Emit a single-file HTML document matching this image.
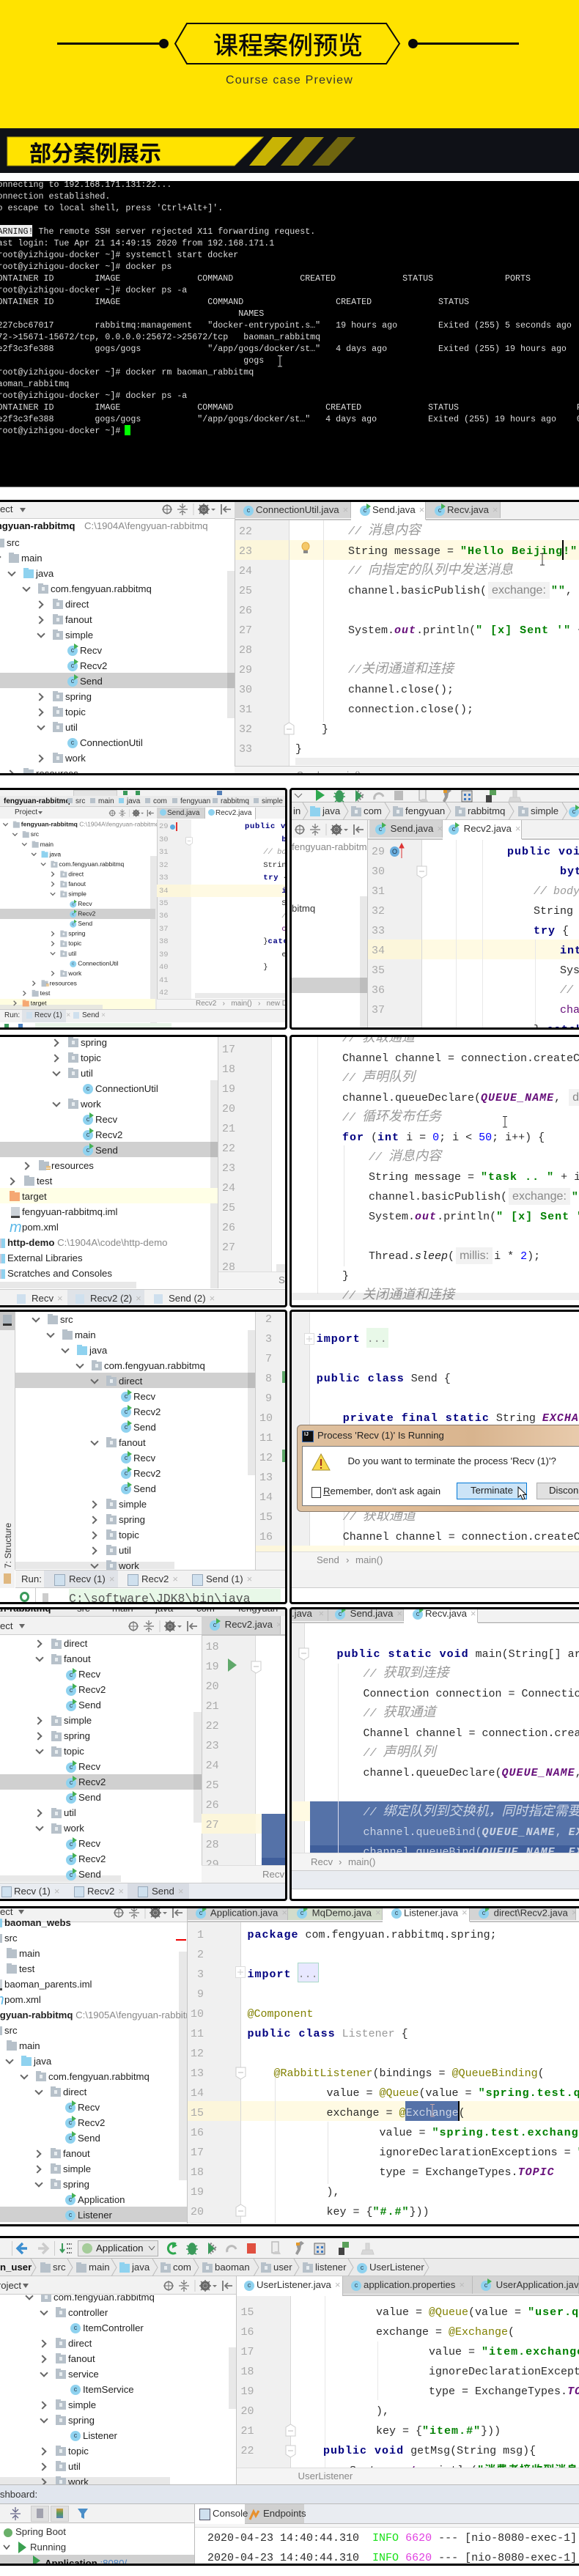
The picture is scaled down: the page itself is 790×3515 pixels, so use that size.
<!DOCTYPE html>
<html><head><meta charset="utf-8"><title>课程案例预览</title>
<style>
html,body{margin:0;padding:0;background:#fff}
html{overflow:hidden;width:790px;height:3515px}
body{position:relative;width:790px;height:3515px;overflow:hidden;font-family:"Liberation Sans","Noto Sans CJK SC",sans-serif}
.P{position:absolute;left:0;top:0;width:790px;height:3515px;background:#fff;overflow:hidden}
.W{position:absolute;left:0;top:0;width:790px;height:3515px;overflow:hidden}
.r{position:absolute}
p{position:absolute;margin:0;white-space:pre;font:13.2px/18px "Liberation Sans","Noto Sans CJK SC",sans-serif;color:#333}
.sm{font-size:10px}
.gr{color:#888}
.B{font-weight:bold;color:#111}
pre{position:absolute;margin:0}
.ln{font:15px/27px "Liberation Mono",monospace;color:#aaa}
.cd,.con{font:15px/27px "Liberation Mono","Noto Sans CJK SC",monospace;color:#2b2b2b}
.cd b{color:#000080;letter-spacing:.067em}
.cd s{text-decoration:none;color:#008000;font-weight:bold;letter-spacing:.067em}
.cd i{color:#660e7a;font-weight:bold;letter-spacing:.067em}
.cd i.p{color:#222;font-weight:normal;letter-spacing:0}
.cd cite{color:#999}
.cd em{font-size:18px;line-height:0}
.cd kbd{font:16px/0 "Liberation Sans",sans-serif;color:#888;background:#f2f2f2;padding:3px 5px;margin:0 2px}
.cd var{color:#0000ff;font-style:normal}
.cd dfn{color:#808000;font-style:normal}
.w,.w i,.w cite{color:#cdd6e6!important}
.T{position:absolute;font:13.2px/21px "Liberation Sans","Noto Sans CJK SC",sans-serif;color:#222}
.T p{position:static;height:21px;font:inherit;color:inherit}
.l1{margin-left:20px}.l2{margin-left:40px}.l3{margin-left:60px}.l4{margin-left:80px}.l5{margin-left:100px}.l6{margin-left:120px}
.sc{transform:scale(.645);transform-origin:0 0}
u{display:inline-block;text-decoration:none;vertical-align:middle;position:relative;width:21px;height:1px}
u.n::before,u.d::before{content:"";position:absolute;left:1px;top:-4px;width:6px;height:6px;border:solid #666;border-width:2px 2px 0 0;transform:rotate(45deg)}
u.d::before{transform:rotate(135deg);left:3px;top:-6px}
u.f,u.h,u.j,u.t,u.o{width:14px;height:12px;margin:0 3px 0 2px;background:#b7c1ca}
u.f::before,u.h::before,u.j::before,u.t::before,u.o::before{content:"";position:absolute;left:0;top:-2px;width:7px;height:2px;background:inherit}
u.f::after{content:"";position:absolute;left:5px;top:3px;width:4px;height:5px;background:#e8edf0}
u.j{background:#8fd2ef}
u.t{background:#f5a873}
u.o::after{content:"";position:absolute;right:-2px;bottom:0;width:6px;height:6px;background:repeating-linear-gradient(#d89a3a 0 1px,#fff 1px 2px)}
u.c{width:14px;height:14px;border-radius:50%;background:#8fd2ef;margin:0 3px 0 2px;font:9px/13px "Liberation Sans",sans-serif;color:#345;text-align:center}
u.c::before{content:"c"}
u.g::after{content:"";position:absolute;right:-1px;top:-3px;border-top:4px solid transparent;border-bottom:4px solid transparent;border-left:6px solid #45b055}
u.e{width:12px;height:15px;margin:0 3px 0 4px;background:#ccd2d8;border-bottom:3px solid #444;box-sizing:border-box}
u.m{width:16px;height:15px;margin:0 1px 0 2px;font:italic 20px/14px "Liberation Sans",sans-serif;color:#5bb8e8}
u.m::before{content:"m"}
u.x{width:12px;height:13px;margin:0 3px 0 4px;background:linear-gradient(90deg,#8fd2ef 30%,#ccd 30% 60%,#8fd2ef 60%)}
.tb{position:absolute;box-sizing:border-box;padding-left:10px;font:13.2px/22px "Liberation Sans",sans-serif;white-space:pre;color:#333;background:#d4d4d4;overflow:hidden;border-right:1px solid #bbb}
.on{background:#fff}
small{font-size:13px;color:#bbb;margin-left:5px}
.tr{position:absolute;width:0;height:0;border-left:4px solid transparent;border-right:4px solid transparent;border-top:6px solid #666}
.fr{position:absolute;box-sizing:border-box;border:3px solid #000;border-radius:4px}
svg{position:absolute;overflow:visible}
</style></head><body>
<svg width="0" height="0" style="left:0;top:0">
<symbol id="pb" viewBox="0 0 100 20" overflow="visible"><circle cx="8" cy="10" r="5.5" fill="none" stroke="#777" stroke-width="1.6"/><path d="M8 3V17M1 10H15" stroke="#777"/><path d="M22 10H36M29 2V7M29 18V13M25 5l4 3 4-3M25 15l4-3 4 3" fill="none" stroke="#777" stroke-width="1.3"/><path d="M44 2V18" stroke="#ccc"/><circle cx="58" cy="10" r="5" fill="none" stroke="#666" stroke-width="3"/><path d="M58 2V18M50 10H66M52 4l12 12M64 4L52 16" stroke="#666" stroke-width="1.4"/><path d="M68 9h6l-3 3z" fill="#777"/><path d="M82 3V17M95 10H85M89 6l-4 4 4 4" fill="none" stroke="#777" stroke-width="1.8"/></symbol>
<symbol id="tb" viewBox="0 0 285 24" overflow="visible"><path d="M27 5a5 7.5 0 1 0 .1 0ZM20 8l3 2M34 8l-3 2M19 13h4M35 13h-4M21 20l3-2M33 20l-3-2" fill="#3a9a5a" stroke="#3a9a5a" stroke-width="1.5"/><path d="M49 4 58 12 49 20Z" fill="#3a9a5a"/><path d="M52 5l8 7-8 7" fill="none" stroke="#888" stroke-width="3" stroke-dasharray="2 2"/><path d="M75 17A6 6 0 0 1 87 13" fill="none" stroke="#bbb" stroke-width="3"/><rect x="102" y="5" width="12" height="13" fill="#bbb"/><path d="M136 3h9v15h-9Z" fill="#eee" stroke="#bbb" stroke-width="1.5"/><path d="M137 20h11l-2-4h-6Z" fill="#ccc"/><path d="M169 6 176 2l4 3-4 3-1 6-4 7-3-2 3-6Z" fill="#999"/><path d="M169 4h5v4h-5Z" fill="#e49a2c"/><path d="M194 5h14v15h-14Z" fill="#ddd" stroke="#666"/><path d="M197 9h3v3h-3ZM203 9h3v3h-3ZM197 15h3v3h-3ZM203 15h3v3h-3Z" fill="#3b78c2"/><path d="M227 11h8v10h-8Z" fill="#444"/><path d="M232 3h9v8h-9Z" fill="#5aa05a"/><path d="M264 5h5v9h-5ZM260 14h13l2 6h-17Z" fill="#d8d8d8" stroke="#ccc"/></symbol>
<symbol id="fo" viewBox="0 0 15 18" overflow="visible"><path d="M1 5 7.5 1 14 5V17H1Z" fill="#fff" stroke="#ccc"/><path d="M4 10H11" stroke="#bbb"/></symbol>
<symbol id="fd" viewBox="0 0 15 18" overflow="visible"><path d="M1 1H14V13L7.5 17 1 13Z" fill="#fff" stroke="#ccc"/><path d="M4 8H11" stroke="#bbb"/></symbol>
<symbol id="sp" viewBox="0 0 8 24" overflow="visible"><path d="M0 0 7 12 0 24" fill="none" stroke="#bbb"/></symbol>
</svg>

<!-- Header -->
<div class="r" style="left:0;top:0;width:790px;height:175px;background:#ffe300"></div>
<div class="r" style="left:78px;top:58px;width:146px;height:3px;background:#0a0a0a"></div>
<div class="r" style="left:217px;top:53px;width:13px;height:13px;border-radius:50%;background:#0a0a0a"></div>
<div class="r" style="left:557px;top:53px;width:13px;height:13px;border-radius:50%;background:#0a0a0a"></div>
<div class="r" style="left:564px;top:58px;width:144px;height:3px;background:#0a0a0a"></div>
<svg style="left:0;top:0" width="790" height="100"><path d="M239 59.5 255 32H527L545 59.5 527 87H255Z" fill="none" stroke="#0a0a0a" stroke-width="2"/></svg>
<p style="left:290px;top:38px;width:206px;text-align:center;font:34px/44px 'Noto Sans CJK SC',sans-serif;color:#0a0a0a;-webkit-text-stroke:.4px #0a0a0a">课程案例预览</p>
<p style="left:250px;top:100px;width:290px;text-align:center;font:16px/20px 'Liberation Sans',sans-serif;letter-spacing:1.2px;color:#333">Course case Preview</p>
<!-- Banner -->
<div class="r" style="left:0;top:175px;width:790px;height:61px;background:#0f1117"></div>
<svg style="left:0;top:175px" width="790" height="61"><path d="M10 12H359L320 51H10Z" fill="#ffe300" stroke="#b9a60a"/><path d="M372 12H399L362 51H340Z" fill="#c9b404"/><path d="M416 12H442L407 51H383Z" fill="#9c8c0a"/><path d="M461 12H485L449 51H426Z" fill="#6f650f"/></svg>
<p style="left:40px;top:186px;font:bold 30px/42px 'Noto Sans CJK SC',sans-serif;color:#0a0a0a">部分案例展示</p>
<!-- Terminal -->
<div class="P" style="clip-path:inset(247px 0 2850px 0);background:#000">
<div class="r" style="left:0;top:307px;width:44px;height:16px;background:#eee"></div>
<pre style="left:-10.5px;top:243.7px;font:11.67px/16px 'Liberation Mono',monospace;color:#ddd">Connecting to 192.168.171.131:22...
Connection established.
To escape to local shell, press 'Ctrl+Alt+]'.

<span style="color:#111">WARNING!</span> The remote SSH server rejected X11 forwarding request.
Last login: Tue Apr 21 14:49:15 2020 from 192.168.171.1
[root@yizhigou-docker ~]# systemctl start docker
[root@yizhigou-docker ~]# docker ps
CONTAINER ID        IMAGE               COMMAND             CREATED             STATUS              PORTS
[root@yizhigou-docker ~]# docker ps -a
CONTAINER ID        IMAGE                 COMMAND                  CREATED             STATUS
                                                NAMES
8227cbc67017        rabbitmq:management   "docker-entrypoint.s…"   19 hours ago        Exited (255) 5 seconds ago
 72->15671-15672/tcp, 0.0.0.0:25672->25672/tcp   baoman_rabbitmq
8e2f3c3fe388        gogs/gogs             "/app/gogs/docker/st…"   4 days ago          Exited (255) 19 hours ago
                                                 gogs
[root@yizhigou-docker ~]# docker rm baoman_rabbitmq
baoman_rabbitmq
[root@yizhigou-docker ~]# docker ps -a
CONTAINER ID        IMAGE               COMMAND                  CREATED             STATUS                       PORTS
8e2f3c3fe388        gogs/gogs           "/app/gogs/docker/st…"   4 days ago          Exited (255) 19 hours ago    0
[root@yizhigou-docker ~]#</pre>
<div class="r" style="left:170px;top:580px;width:8px;height:14px;background:#0f0"></div>
<svg style="left:378px;top:485px" width="8" height="16"><path d="M1 .5H7M4 .5V15M1 15H7" stroke="#ccc" fill="none"/></svg>
</div>
<div class="r" style="left:0;top:664px;width:790px;height:1px;background:#888"></div>

<!-- Section A -->
<div class="P" style="clip-path:inset(685px 0 2460px 0)">
<div class="r" style="left:0;top:685px;width:320px;height:22px;background:#f2f2f2;border-bottom:1px solid #ccc"></div>
<p style="left:-23.5px;top:686px">Project</p><div class="tr" style="left:27px;top:693px"></div>
<svg style="left:220px;top:685px" width="100" height="20"><use href="#pb"/></svg>
<p class="B" style="left:-17px;top:709px">fengyuan-rabbitmq</p><p class="gr" style="left:115px;top:709px">C:\1904A\fengyuan-rabbitmq</p>
<div class="r" style="left:310px;top:779px;width:10px;height:201px;background:#e8e8e8"></div>
<div class="r" style="left:0;top:918px;width:320px;height:21px;background:#d0d0d0"></div>
<div class="r" style="left:310px;top:918px;width:10px;height:21px;background:#bdbdbd"></div>
<div class="T" style="left:-31px;top:729.5px">
<p><u class="d"></u><u class="h"></u>src</p>
<p class="l1"><u class="d"></u><u class="h"></u>main</p>
<p class="l2"><u class="d"></u><u class="j"></u>java</p>
<p class="l3"><u class="d"></u><u class="f"></u>com.fengyuan.rabbitmq</p>
<p class="l4"><u class="n"></u><u class="f"></u>direct</p>
<p class="l4"><u class="n"></u><u class="f"></u>fanout</p>
<p class="l4"><u class="d"></u><u class="f"></u>simple</p>
<p class="l5"><u></u><u class="c g"></u>Recv</p>
<p class="l5"><u></u><u class="c g"></u>Recv2</p>
<p class="l5"><u></u><u class="c g"></u>Send</p>
<p class="l4"><u class="n"></u><u class="f"></u>spring</p>
<p class="l4"><u class="n"></u><u class="f"></u>topic</p>
<p class="l4"><u class="d"></u><u class="f"></u>util</p>
<p class="l5"><u></u><u class="c"></u>ConnectionUtil</p>
<p class="l4"><u class="n"></u><u class="f"></u>work</p>
<p class="l2"><u class="n"></u><u class="o"></u>resources</p>
</div>
<div class="r" style="left:320px;top:685px;width:470px;height:22px;background:#f2f2f2"></div>
<div class="r" style="left:320px;top:685px;width:1px;height:370px;background:#c4c4c4"></div>
<div class="tb" style="left:320px;top:685px;width:159px;height:22px"><u class="c"></u>ConnectionUtil.java<small>×</small></div>
<div class="tb on" style="left:479px;top:685px;width:102px;height:24px"><u class="c g"></u>Send.java<small>×</small></div>
<div class="tb" style="left:581px;top:685px;width:102px;height:22px"><u class="c g"></u>Recv.java<small>×</small></div>
<div class="r" style="left:321px;top:708px;width:158px;height:2px;background:#c4c4c4"></div>
<div class="r" style="left:581px;top:708px;width:209px;height:2px;background:#c4c4c4"></div>
<div class="r" style="left:321px;top:710px;width:73px;height:345px;background:#f0f0f0;border-right:1px solid #d8d8d8"></div>
<div class="r" style="left:321px;top:737px;width:73px;height:27px;background:#fcf6db"></div>
<div class="r" style="left:395px;top:737px;width:395px;height:27px;background:#fffae3"></div>
<div class="r" style="left:441px;top:710px;width:1px;height:275px;background:#e4e4e4"></div>
<pre class="ln" style="left:326px;top:712px">22
23
24
25
26
27
28
29
30
31
32
33</pre>
<pre class="cd" style="left:403px;top:712px">        <cite>// <em>消息内容</em></cite>
        String message = <s>"Hello Beijing!"</s>
        <cite>// <em>向指定的队列中发送消息</em></cite>
        channel.basicPublish(<kbd>exchange:</kbd><s>""</s>,

        System.<i>out</i>.println(<s>" [x] Sent '"</s> +

        <cite>//<em>关闭通道和连接</em></cite>
        channel.close();
        connection.close();
    }
}</pre>
<div class="r" style="left:767px;top:737px;width:2px;height:27px;background:#000"></div>
<svg style="left:736px;top:755px" width="8" height="17"><path d="M1 .5H7M4 .5V16M1 16H7" stroke="#333" fill="none"/></svg>
<svg style="left:411px;top:740px" width="12" height="16"><ellipse cx="6" cy="5.5" rx="5" ry="5.5" fill="#f5c96a" stroke="#e0a840"/><rect x="3" y="11" width="6" height="4" fill="#888"/></svg>
<svg style="left:387px;top:985px" width="15" height="18"><use href="#fo"/></svg>
<div class="r" style="left:403px;top:1034px;width:387px;height:10px;background:#eee"></div>
<div class="r" style="left:320px;top:1045px;width:470px;height:10px;background:#f4f4f4;border-top:1px solid #ccc"></div>
<p class="gr" style="left:405px;top:1049px">Send  ›  main()</p>
</div>

<!-- Panel B1 -->
<div class="P" style="clip-path:inset(1078px 401px 2113px 0)">
<div class="r" style="left:0;top:1078px;width:390px;height:8px;background:#f2f2f2"></div>
<div class="r" style="left:100px;top:1078px;width:58px;height:7px;background:#e4e4e4;border:1px solid #ccc"></div>
<div class="r" style="left:168px;top:1079px;width:6px;height:6px;background:#3a9a5a"></div>
<div class="r" style="left:185px;top:1079px;width:6px;height:6px;background:#3a9a5a"></div>
<div class="r" style="left:296px;top:1079px;width:7px;height:6px;background:#5580b8"></div>
<div class="r" style="left:0;top:1086px;width:390px;height:15px;background:#ebebeb;border-bottom:1px solid #ccc;box-sizing:border-box"></div>
<p class="sm B" style="left:5px;top:1085px">fengyuan-rabbitmq</p>
<p class="sm" style="left:103px;top:1085px">src</p><p class="sm" style="left:134px;top:1085px">main</p><p class="sm" style="left:173px;top:1085px">java</p><p class="sm" style="left:209px;top:1085px">com</p><p class="sm" style="left:246px;top:1085px">fengyuan</p><p class="sm" style="left:301px;top:1085px">rabbitmq</p><p class="sm" style="left:357px;top:1085px">simple</p>
<div class="r" style="left:92px;top:1089px;width:7px;height:7px;background:#b7c1ca"></div><div class="r" style="left:123px;top:1089px;width:7px;height:7px;background:#b7c1ca"></div><div class="r" style="left:162px;top:1089px;width:7px;height:7px;background:#8fd2ef"></div><div class="r" style="left:198px;top:1089px;width:7px;height:7px;background:#b7c1ca"></div><div class="r" style="left:235px;top:1089px;width:7px;height:7px;background:#b7c1ca"></div><div class="r" style="left:290px;top:1089px;width:7px;height:7px;background:#b7c1ca"></div><div class="r" style="left:346px;top:1089px;width:7px;height:7px;background:#b7c1ca"></div>
<div class="r" style="left:0;top:1101px;width:214px;height:16px;background:#f2f2f2"></div>
<p class="sm" style="left:20px;top:1100px">Project</p><div class="tr" style="left:52px;top:1107px;border-width:4px 3px 0"></div>
<svg style="left:148px;top:1103px" width="65" height="13"><use href="#pb"/></svg>
<div class="r" style="left:205px;top:1168px;width:9px;height:238px;background:#e8e8e8"></div>
<div class="r" style="left:0;top:1240px;width:212px;height:14px;background:#d0d0d0"></div>
<div class="r" style="left:0;top:1363px;width:212px;height:14px;background:#fffde0"></div>
<div class="r" style="left:0;top:1371px;width:140px;height:6px;background:#e8e8e0"></div>
<div class="T sc" style="left:2.6px;top:1118.2px">
<p><u class="d"></u><u class="h"></u><span style="font-weight:bold">fengyuan-rabbitmq</span> <span style="color:#888">C:\1904A\fengyuan-rabbitmq</span></p>
<p class="l1"><u class="d"></u><u class="h"></u>src</p>
<p class="l2"><u class="d"></u><u class="h"></u>main</p>
<p class="l3"><u class="d"></u><u class="j"></u>java</p>
<p class="l4"><u class="d"></u><u class="f"></u>com.fengyuan.rabbitmq</p>
<p class="l5"><u class="n"></u><u class="f"></u>direct</p>
<p class="l5"><u class="n"></u><u class="f"></u>fanout</p>
<p class="l5"><u class="d"></u><u class="f"></u>simple</p>
<p class="l6"><u></u><u class="c g"></u>Recv</p>
<p class="l6"><u></u><u class="c g"></u>Recv2</p>
<p class="l6"><u></u><u class="c g"></u>Send</p>
<p class="l5"><u class="n"></u><u class="f"></u>spring</p>
<p class="l5"><u class="n"></u><u class="f"></u>topic</p>
<p class="l5"><u class="d"></u><u class="f"></u>util</p>
<p class="l6"><u></u><u class="c"></u>ConnectionUtil</p>
<p class="l5"><u class="n"></u><u class="f"></u>work</p>
<p class="l3"><u class="n"></u><u class="o"></u>resources</p>
<p class="l2"><u class="n"></u><u class="h"></u>test</p>
<p class="l1"><u class="n"></u><u class="t"></u>target</p>
</div>
<div class="r" style="left:212px;top:1101px;width:178px;height:16px;background:#f2f2f2"></div>
<div class="tb" style="left:214px;top:1102px;width:66px;height:15px;padding-left:14px;font-size:10px;line-height:15px">Send.java <small style="font-size:9px">×</small></div>
<div class="r" style="left:218px;top:1104px;width:9px;height:9px;border-radius:50%;background:#8fd2ef"></div>
<div class="tb on" style="left:280px;top:1102px;width:69px;height:16px;padding-left:14px;font-size:10px;line-height:15px">Recv2.java <small style="font-size:9px">×</small></div>
<div class="r" style="left:284px;top:1104px;width:9px;height:9px;border-radius:50%;background:#8fd2ef"></div>
<div class="r" style="left:214px;top:1118px;width:46px;height:245px;background:#f0f0f0;border-left:1px solid #ccc"></div>
<div class="r" style="left:214px;top:1207px;width:46px;height:17px;background:#fcf6db"></div>
<div class="r" style="left:260px;top:1207px;width:130px;height:17px;background:#fffae3"></div>
<pre style="left:217px;top:1120.3px;font:10.5px/17.45px 'Liberation Mono',monospace;color:#aaa">29
30
31
32
33
34
35
36
37
38
39
40
41
42</pre>
<div class="r" style="left:232px;top:1125px;width:7px;height:7px;border-radius:50%;background:#5ba9e0"></div>
<div class="r" style="left:240px;top:1122px;width:1.5px;height:12px;background:#d33"></div>
<pre class="cd" style="left:334px;top:1120.3px;font-size:10.5px;line-height:17.45px"><b>public void</b>
        <b>byte</b>
    <cite>// body</cite>
    String
    <b>try</b> {
        <b>int</b>
        S
        <cite>//</cite>
        <span style="color:#660e7a">c</span>
    }<b>catch</b>
        e
    }</pre>
<svg style="left:253px;top:1142px" width="10" height="12"><use href="#fd"/></svg>
<div class="r" style="left:266px;top:1355px;width:124px;height:7px;background:#eaeaea"></div>
<div class="r" style="left:214px;top:1363px;width:176px;height:14px;background:#f4f4f4;border-top:1px solid #ddd;box-sizing:border-box"></div>
<p class="sm gr" style="left:267px;top:1361px">Recv2   ›   main()   ›   new DefaultC</p>
<div class="r" style="left:0;top:1377px;width:390px;height:18px;background:#f2f2f2;border-top:1px solid #ccc;box-sizing:border-box"></div>
<div class="r" style="left:30px;top:1378px;width:60px;height:17px;background:#dfe3e8"></div>
<p class="sm" style="left:6px;top:1377px">Run:</p><p class="sm" style="left:47px;top:1377px">Recv (1)  <span style="color:#bbb">×</span></p><p class="sm" style="left:112px;top:1377px">Send <span style="color:#bbb">×</span></p>
<div class="r" style="left:36px;top:1381px;width:8px;height:9px;background:#cfe0ee"></div><div class="r" style="left:100px;top:1381px;width:8px;height:9px;background:#cfe0ee"></div>
<div class="r" style="left:48px;top:1396px;width:186px;height:7px;background:#e8f5e8"></div>
<div class="r" style="left:6px;top:1397px;width:6px;height:6px;background:#3a9a5a"></div>
<div class="r" style="left:25px;top:1397px;width:6px;height:6px;background:#4a80c0"></div>
</div>

<!-- Panel B2 -->
<div class="P" style="clip-path:inset(1078px 0 2113px 398px)">
<div class="r" style="left:398px;top:1078px;width:392px;height:16px;background:#f2f2f2;border-bottom:1px solid #bbb"></div>
<svg style="left:400px;top:1079px" width="14" height="14"><path d="M2 4 7 9 12 4" fill="none" stroke="#666"/></svg>
<svg style="left:430px;top:1076px;" width="15" height="20"><path d="M1 1 13 9 1 17Z" fill="#2fa84f"/></svg>
<svg style="left:436px;top:1074px" width="285" height="24"><use href="#tb"/></svg>
<div class="r" style="left:398px;top:1095px;width:392px;height:24px;background:#ececec;border-bottom:1px solid #c8c8c8;box-sizing:border-box"></div>
<p style="left:400px;top:1098px">in</p>
<svg style="left:413px;top:1095px" width="8" height="24"><use href="#sp"/></svg>
<p style="left:421px;top:1098px"><u class="j"></u>java</p>
<svg style="left:468px;top:1095px" width="8" height="24"><use href="#sp"/></svg>
<p style="left:477px;top:1098px"><u class="f"></u>com</p>
<svg style="left:525px;top:1095px" width="8" height="24"><use href="#sp"/></svg>
<p style="left:534px;top:1098px"><u class="f"></u>fengyuan</p>
<svg style="left:608px;top:1095px" width="8" height="24"><use href="#sp"/></svg>
<p style="left:619px;top:1098px"><u class="f"></u>rabbitmq</p>
<svg style="left:694px;top:1095px" width="8" height="24"><use href="#sp"/></svg>
<p style="left:705px;top:1098px"><u class="f"></u>simple</p>
<svg style="left:767px;top:1095px" width="8" height="24"><use href="#sp"/></svg>
<p style="left:774px;top:1098px"><u class="c g"></u></p>
<div class="r" style="left:398px;top:1119px;width:392px;height:24px;background:#f2f2f2"></div>
<svg style="left:401px;top:1122px" width="100" height="20"><use href="#pb"/></svg>
<p class="gr" style="left:398px;top:1147px">fengyuan-rabbitm</p>
<p style="left:398px;top:1231px">bitmq</p>
<div class="r" style="left:491px;top:1223px;width:10px;height:180px;background:#e8e8e8"></div>
<div class="r" style="left:398px;top:1334px;width:103px;height:21px;background:#d0d0d0"></div>
<div class="r" style="left:491px;top:1334px;width:10px;height:21px;background:#bdbdbd"></div>
<div class="tb" style="left:504px;top:1119px;width:100px;height:24px;padding-left:6px;line-height:24px;background:#d4d4d4"><u class="c g"></u> Send.java<small>×</small></div>
<div class="tb on" style="left:604px;top:1119px;width:108px;height:26px;padding-left:6px;line-height:24px"><u class="c g"></u> Recv2.java<small>×</small></div>
<div class="r" style="left:501px;top:1119px;width:1px;height:284px;background:#c4c4c4"></div>
<div class="r" style="left:502px;top:1144px;width:102px;height:2px;background:#c4c4c4"></div><div class="r" style="left:712px;top:1144px;width:78px;height:2px;background:#c4c4c4"></div>
<div class="r" style="left:502px;top:1146px;width:73px;height:258px;background:#f0f0f0;border-right:1px solid #d8d8d8"></div>
<div class="r" style="left:502px;top:1282px;width:73px;height:27px;background:#fcf6db"></div>
<div class="r" style="left:576px;top:1282px;width:214px;height:27px;background:#fffae3"></div>
<div class="r" style="left:622px;top:1146px;width:1px;height:258px;background:#e8e8e8"></div>
<div class="r" style="left:658px;top:1146px;width:1px;height:258px;background:#e8e8e8"></div>
<div class="r" style="left:730px;top:1282px;width:1px;height:120px;background:#e8e8e8"></div>
<pre class="ln" style="left:507px;top:1149px">29
30
31
32
33
34
35
36
37</pre>
<div class="r" style="left:532px;top:1155px;width:13px;height:14px;border-radius:50%;background:#6aaede;font:9px/14px 'Liberation Sans',sans-serif;text-align:center;color:#234">O</div>
<svg style="left:544px;top:1150px" width="8" height="21"><path d="M4 21V3M1 7 4 1 7 7Z" stroke="#d33" fill="#d33"/></svg>
<svg style="left:568px;top:1181px" width="15" height="18"><use href="#fd"/></svg>
<pre class="cd" style="left:692px;top:1149px"><b>public void</b>
        <b>byte</b>
    <cite>// body</cite>
    String
    <b>try</b> {
        <b>int</b>
        Sys
        <cite>//</cite>
        <span style="color:#660e7a">cha</span>
    } <b>catch</b></pre>
</div>

<!-- Panel C1 -->
<div class="P" style="clip-path:inset(1415px 401px 1734px 0)">
<div class="r" style="left:287px;top:1474px;width:10px;height:284px;background:#e8e8e8"></div>
<div class="r" style="left:0;top:1558px;width:297px;height:21px;background:#d0d0d0"></div>
<div class="r" style="left:287px;top:1558px;width:10px;height:21px;background:#bdbdbd"></div>
<div class="r" style="left:0;top:1621px;width:297px;height:21px;background:#ffffe6"></div>
<div class="T" style="left:-30px;top:1411.5px">
<p class="l5"><u class="n"></u><u class="f"></u>spring</p>
<p class="l5"><u class="n"></u><u class="f"></u>topic</p>
<p class="l5"><u class="d"></u><u class="f"></u>util</p>
<p class="l6"><u></u><u class="c"></u>ConnectionUtil</p>
<p class="l5"><u class="d"></u><u class="f"></u>work</p>
<p class="l6"><u></u><u class="c g"></u>Recv</p>
<p class="l6"><u></u><u class="c g"></u>Recv2</p>
<p class="l6"><u></u><u class="c g"></u>Send</p>
<p class="l3"><u class="n"></u><u class="o"></u>resources</p>
<p class="l2"><u class="n"></u><u class="h"></u>test</p>
<p class="l1"><u></u><u class="t"></u>target</p>
<p class="l1"><u></u><u class="e"></u>fengyuan-rabbitmq.iml</p>
<p class="l1"><u></u><u class="m"></u>pom.xml</p>
<p><u></u><u class="x"></u><span style="font-weight:bold">http-demo</span> <span style="color:#888">C:\1904A\code\http-demo</span></p>
<p><u></u><u class="x"></u>External Libraries</p>
<p><u></u><u class="x"></u>Scratches and Consoles</p>
</div>
<div class="r" style="left:0;top:1749px;width:186px;height:9px;background:#e8e8e8"></div>
<div class="r" style="left:297px;top:1415px;width:74px;height:320px;background:#f0f0f0;border-left:1px solid #ccc;border-right:1px solid #e0e0e0;box-sizing:border-box"></div>
<pre class="ln" style="left:303px;top:1419px">17
18
19
20
21
22
23
24
25
26
27
28</pre>
<div class="r" style="left:297px;top:1735px;width:93px;height:23px;background:#f4f4f4;border-top:1px solid #ddd;border-left:1px solid #ccc;box-sizing:border-box"></div>
<div class="r" style="left:377px;top:1725px;width:13px;height:10px;background:#e8e8e8"></div>
<p class="gr" style="left:380px;top:1738px">S</p>
<div class="r" style="left:0;top:1759px;width:390px;height:23px;background:#f2f2f2;border-top:1px solid #ccc;box-sizing:border-box"></div>
<div class="r" style="left:92px;top:1760px;width:105px;height:22px;background:#dfe3e8"></div>
<p style="left:23px;top:1763px"><u style="width:12px;height:13px;background:#cfe0ee;margin-right:8px"></u>Recv<small>×</small></p>
<p style="left:103px;top:1763px"><u style="width:12px;height:13px;background:#cfe0ee;margin-right:8px"></u>Recv2 (2)<small>×</small></p>
<p style="left:210px;top:1763px"><u style="width:12px;height:13px;background:#cfe0ee;margin-right:8px"></u>Send (2)<small>×</small></p>
</div>

<!-- Panel C2 -->
<div class="P" style="clip-path:inset(1415px 0 1734px 398px)">
<div class="r" style="left:433px;top:1415px;width:1px;height:350px;background:#e4e4e4"></div>
<div class="r" style="left:469px;top:1563px;width:1px;height:165px;background:#e4e4e4"></div>
<pre class="cd" style="left:467px;top:1403.8px"><cite>// <em>获取通道</em></cite>
Channel channel = connection.createChannel();
<cite>// <em>声明队列</em></cite>
channel.queueDeclare(<i>QUEUE_NAME</i>, <kbd>d</kbd>
<cite>// <em>循环发布任务</em></cite>
<b>for</b> (<b>int</b> i = <var>0</var>; i &lt; <var>50</var>; i++) {
    <cite>// <em>消息内容</em></cite>
    String message = <s>"task .. "</s> + i
    channel.basicPublish(<kbd>exchange:</kbd><s>"</s>
    System.<i>out</i>.println(<s>" [x] Sent "</s>

    Thread.<i class="p">sleep</i>(<kbd>millis:</kbd>i * <var>2</var>);
}
<cite>// <em>关闭通道和连接</em></cite></pre>
<svg style="left:685px;top:1523px" width="8" height="16"><path d="M1 .5H7M4 .5V15M1 15H7" stroke="#333" fill="none"/></svg>
<div class="r" style="left:398px;top:1764px;width:392px;height:10px;background:#ededed;mix-blend-mode:multiply"></div>
</div>

<!-- Panel D1 -->
<div class="P" style="clip-path:inset(1790px 401px 1329px 0)">
<div class="r" style="left:0;top:1790px;width:20px;height:352px;background:#f2f2f2;border-right:1px solid #ccc"></div>
<div class="r" style="left:0;top:1790px;width:20px;height:25px;background:#c8c8c8"></div>
<div class="r" style="left:4px;top:1794px;width:12px;height:15px;background:#aab4bc;border-bottom:3px solid #333;box-sizing:border-box"></div>
<p style="left:3px;top:2078px;writing-mode:vertical-rl;transform:rotate(180deg);font-size:12px;line-height:16px">7: Structure</p>
<div class="r" style="left:338px;top:1815px;width:10px;height:198px;background:#e8e8e8"></div>
<div class="r" style="left:21px;top:1873px;width:327px;height:21px;background:#d0d0d0"></div>
<div class="r" style="left:338px;top:1873px;width:10px;height:21px;background:#bdbdbd"></div>
<div class="r" style="left:21px;top:2131px;width:217px;height:10px;background:#e8e8e8"></div>
<div class="T" style="left:42px;top:1789.5px">
<p><u class="d"></u><u class="h"></u>src</p>
<p class="l1"><u class="d"></u><u class="h"></u>main</p>
<p class="l2"><u class="d"></u><u class="j"></u>java</p>
<p class="l3"><u class="d"></u><u class="f"></u>com.fengyuan.rabbitmq</p>
<p class="l4"><u class="d"></u><u class="f"></u>direct</p>
<p class="l5"><u></u><u class="c g"></u>Recv</p>
<p class="l5"><u></u><u class="c g"></u>Recv2</p>
<p class="l5"><u></u><u class="c g"></u>Send</p>
<p class="l4"><u class="d"></u><u class="f"></u>fanout</p>
<p class="l5"><u></u><u class="c g"></u>Recv</p>
<p class="l5"><u></u><u class="c g"></u>Recv2</p>
<p class="l5"><u></u><u class="c g"></u>Send</p>
<p class="l4"><u class="n"></u><u class="f"></u>simple</p>
<p class="l4"><u class="n"></u><u class="f"></u>spring</p>
<p class="l4"><u class="n"></u><u class="f"></u>topic</p>
<p class="l4"><u class="n"></u><u class="f"></u>util</p>
<p class="l4"><u class="d"></u><u class="f"></u>work</p>
</div>
<div class="r" style="left:348px;top:1790px;width:42px;height:352px;background:#f0f0f0;border-left:1px solid #ccc;box-sizing:border-box"></div>
<pre class="ln" style="left:354px;top:1787.2px;text-align:right;width:17px">2
3
7
8
9
10
11
12
13
14
15
16</pre>
<div class="r" style="left:385px;top:1871px;width:4px;height:16px;background:#5fa86a"></div>
<div class="r" style="left:385px;top:1978px;width:4px;height:17px;background:#5fa86a"></div>
<div class="r" style="left:349px;top:2109px;width:41px;height:8px;background:#fcf6db"></div>
<div class="r" style="left:349px;top:2117px;width:41px;height:24px;background:#f4f4f4;border-top:1px solid #ddd;box-sizing:border-box"></div>
<div class="r" style="left:21px;top:2142px;width:369px;height:25px;background:#f2f2f2;border-top:1px solid #ccc;border-bottom:1px solid #ccc;box-sizing:border-box"></div>
<div class="r" style="left:60px;top:2143px;width:101px;height:23px;background:#e0e3e8"></div>
<p style="left:29px;top:2146px">Run:</p>
<div class="r" style="left:74px;top:2148px;width:13px;height:14px;background:#cfe0ee;border:1px solid #9ab"></div>
<p style="left:94px;top:2146px">Recv (1)<small>×</small></p>
<div class="r" style="left:174px;top:2148px;width:13px;height:14px;background:#cfe0ee;border:1px solid #9ab"></div>
<p style="left:193px;top:2146px">Recv2<small>×</small></p>
<div class="r" style="left:262px;top:2148px;width:13px;height:14px;background:#cfe0ee;border:1px solid #9ab"></div>
<p style="left:281px;top:2146px">Send (1)<small>×</small></p>
<div class="r" style="left:0;top:2142px;width:20px;height:25px;background:#f2f2f2"></div>
<div class="r" style="left:5px;top:2147px;width:10px;height:14px;background:#d8a050;opacity:.7"></div>
<div class="r" style="left:94px;top:2168px;width:289px;height:18px;background:#e8f8e8"></div>
<div class="r" style="left:27px;top:2172px;width:13px;height:14px;border:3px solid #3a9a5a;border-radius:50%;box-sizing:border-box"></div>
<div class="r" style="left:58px;top:2174px;width:8px;height:12px;background:#ccc"></div>
<div class="r" style="left:48px;top:2167px;width:1px;height:20px;background:#ccc"></div>
<pre style="left:94px;top:2170px;font:16.5px/24px 'Liberation Mono',monospace;color:#555">C:\software\JDK8\bin\java</pre>
</div>

<!-- Panel D2 -->
<div class="P" style="clip-path:inset(1790px 0 1329px 398px)">
<div class="r" style="left:398px;top:1790px;width:24px;height:327px;background:#f0f0f0;border-right:1px solid #ddd"></div>
<div class="r" style="left:469px;top:1955px;width:1px;height:162px;background:#e4e4e4"></div>
<div class="r" style="left:398px;top:2109px;width:392px;height:8px;background:#fffae3"></div>
<div class="r" style="left:500px;top:1812px;width:30px;height:27px;background:#e8f8e8"></div>
<svg style="left:415px;top:1819px" width="14" height="16"><path d="M.5.5H13.5V15.5H.5Z" fill="#fff" stroke="#ddd"/><path d="M3 8H11M7 4V12" stroke="#ccc"/></svg>
<pre class="cd" style="left:431.7px;top:1814.2px"><b>import</b> <span style="color:#888">...</span>

<b>public class</b> Send {

    <b>private final static</b> String <i>EXCHANGE_NAME</i>




    <cite>// <em>获取通道</em></cite>
    Channel channel = connection.createChannel();</pre>
<div class="r" style="left:398px;top:2117px;width:392px;height:24px;background:#f4f4f4;border-top:1px solid #ddd;border-bottom:1px solid #ccc;box-sizing:content-box"></div>
<p class="gr" style="left:432px;top:2120px">Send</p><p class="gr" style="left:472px;top:2120px">›</p><p class="gr" style="left:485px;top:2120px">main()</p>
<div class="r" style="left:398px;top:2142px;width:392px;height:25px;background:#f2f2f2;border-bottom:1px solid #ccc;box-sizing:border-box"></div>
<!-- dialog -->
<div class="r" style="left:404.5px;top:1944px;width:400px;height:119px;border-radius:6px;background:linear-gradient(90deg,#dcc0a0,#e2bd97 30%,#d8b48e 60%,#eacdaf);border:1px solid #8a7a6a;box-sizing:border-box"></div>
<div class="r" style="left:412px;top:1952px;width:16px;height:16px;background:#111;border:1px solid #3a6ab0;box-sizing:border-box;color:#fff;font:bold 7px/10px 'Liberation Sans',sans-serif;text-align:left;padding-left:2px">IJ</div>
<p style="left:433px;top:1950px;color:#222">Process 'Recv (1)' Is Running</p>
<div class="r" style="left:412px;top:1973px;width:400px;height:82px;background:#fff;border:1px solid #777;box-sizing:border-box"></div>
<svg style="left:425px;top:1982px" width="27" height="27"><path d="M13 2 25 24H1Z" fill="#f8d94a" stroke="#a89030"/><path d="M13 9V18M13 20V22" stroke="#a03020" stroke-width="2.2"/></svg>
<p style="left:474.5px;top:1985px;color:#222">Do you want to terminate the process 'Recv (1)'?</p>
<div class="r" style="left:425px;top:2029px;width:11px;height:13px;border:1px solid #333;background:#fff"></div>
<p style="left:441px;top:2026px;color:#222"><span style="text-decoration:underline">R</span>emember, don't ask again</p>
<div class="r" style="left:623px;top:2023px;width:96px;height:23px;background:#cce4f7;border:1.5px solid #0078d7;box-sizing:border-box"></div>
<p style="left:642px;top:2025px;color:#222">Terminate</p>
<svg style="left:706px;top:2028px" width="14" height="20"><path d="M1 1V15L4.5 12 7 18 10 17 7.5 11.5H12Z" fill="#fff" stroke="#111"/></svg>
<div class="r" style="left:732px;top:2023px;width:100px;height:23px;background:#e1e1e1;border:1px solid #adadad;box-sizing:border-box"></div>
<p style="left:749px;top:2025px;color:#222">Disconnect</p>
</div>

<!-- Panel E1 -->
<div class="P" style="clip-path:inset(2195.5px 401px 924px 0)">
<div class="r" style="left:0;top:2195px;width:390px;height:10px;background:#ebebeb;border-bottom:1px solid #ccc"></div>
<p class="B" style="left:-50px;top:2186px">fengyuan-rabbitmq</p><p style="left:105px;top:2186px">src</p><p style="left:153px;top:2186px">main</p><p style="left:212px;top:2186px">java</p><p style="left:268px;top:2186px">com</p><p style="left:325px;top:2186px">fengyuan</p>
<div class="r" style="left:0;top:2206px;width:275px;height:25px;background:#f2f2f2;border-bottom:1px solid #ccc;box-sizing:border-box"></div>
<p style="left:-23.5px;top:2210px">Project</p><div class="tr" style="left:26px;top:2216px"></div>
<svg style="left:174px;top:2209px" width="100" height="20"><use href="#pb"/></svg>
<div class="r" style="left:264px;top:2336px;width:11px;height:151px;background:#e8e8e8"></div>
<div class="r" style="left:0;top:2421px;width:275px;height:21px;background:#d0d0d0"></div>
<div class="r" style="left:264px;top:2421px;width:11px;height:21px;background:#bdbdbd"></div>
<div class="r" style="left:0;top:2559px;width:165px;height:9px;background:#e8e8e8"></div>
<div class="T" style="left:47px;top:2232.2px">
<p><u class="n"></u><u class="f"></u>direct</p>
<p><u class="d"></u><u class="f"></u>fanout</p>
<p class="l1"><u></u><u class="c g"></u>Recv</p>
<p class="l1"><u></u><u class="c g"></u>Recv2</p>
<p class="l1"><u></u><u class="c g"></u>Send</p>
<p><u class="n"></u><u class="f"></u>simple</p>
<p><u class="n"></u><u class="f"></u>spring</p>
<p><u class="d"></u><u class="f"></u>topic</p>
<p class="l1"><u></u><u class="c g"></u>Recv</p>
<p class="l1"><u></u><u class="c g"></u>Recv2</p>
<p class="l1"><u></u><u class="c g"></u>Send</p>
<p><u class="n"></u><u class="f"></u>util</p>
<p><u class="d"></u><u class="f"></u>work</p>
<p class="l1"><u></u><u class="c g"></u>Recv</p>
<p class="l1"><u></u><u class="c g"></u>Recv2</p>
<p class="l1"><u></u><u class="c g"></u>Send</p>
</div>
<div class="r" style="left:275px;top:2205px;width:115px;height:26px;background:#f2f2f2;border-left:1px solid #c4c4c4;box-sizing:border-box"></div>
<div class="tb" style="left:275px;top:2205px;width:108px;height:25px;padding-left:9px;line-height:24px"><u class="c g"></u> Recv2.java<small>×</small></div>
<div class="r" style="left:275px;top:2230px;width:115px;height:2px;background:#c4c4c4"></div>
<div class="r" style="left:275px;top:2232px;width:74px;height:313px;background:#f0f0f0;border-left:1px solid #c8c8c8;border-right:1px solid #d8d8d8;box-sizing:border-box"></div>
<div class="r" style="left:275px;top:2475px;width:74px;height:27px;background:#fcf6db"></div>
<div class="r" style="left:349px;top:2475px;width:8px;height:27px;background:#fffae3"></div>
<div class="r" style="left:357px;top:2475px;width:33px;height:60px;background:#5572a8"></div>
<div class="r" style="left:357px;top:2535px;width:33px;height:10px;background:#3f5e9b"></div>
<pre class="ln" style="left:280.6px;top:2234.2px">18
19
20
21
22
23
24
25
26
27
28
29</pre>
<svg style="left:311px;top:2263px" width="13" height="18"><path d="M0 0 12 9 0 18Z" fill="#5fa86a"/></svg>
<svg style="left:342px;top:2266px" width="15" height="18"><use href="#fd"/></svg>
<div class="r" style="left:275px;top:2545px;width:115px;height:24px;background:#f4f4f4;border-top:1px solid #ddd;box-sizing:border-box"></div>
<p class="gr" style="left:358px;top:2549px">Recv</p>
<div class="r" style="left:0;top:2569px;width:390px;height:22px;background:#e9ecf1;border-top:1px solid #ccc;box-sizing:border-box"></div>
<div class="r" style="left:174px;top:2570px;width:84px;height:21px;background:#d8dce4"></div>
<div class="r" style="left:2px;top:2574px;width:12px;height:13px;background:#cfe0ee;border:1px solid #9ab"></div><p style="left:19px;top:2572px">Recv (1)<small>×</small></p>
<div class="r" style="left:101px;top:2574px;width:12px;height:13px;background:#cfe0ee;border:1px solid #9ab"></div><p style="left:119px;top:2572px">Recv2<small>×</small></p>
<div class="r" style="left:188px;top:2574px;width:12px;height:13px;background:#cfe0ee;border:1px solid #9ab"></div><p style="left:207px;top:2572px">Send<small>×</small></p>
</div>

<!-- Panel E2 -->
<div class="P" style="clip-path:inset(2195.5px 0 924px 398px)">
<div class="r" style="left:398px;top:2195px;width:392px;height:17px;background:#f2f2f2"></div>
<div class="tb" style="left:398px;top:2195px;width:50px;height:17px;padding-left:0;line-height:14px">.java <small>×</small></div>
<div class="tb" style="left:448px;top:2195px;width:103px;height:17px;padding-left:7px;line-height:14px"><u class="c g"></u> Send.java<small>×</small></div>
<div class="tb on" style="left:551px;top:2195px;width:101px;height:19px;padding-left:10px;line-height:14px"><u class="c g"></u>Recv.java<small>×</small></div>
<div class="r" style="left:398px;top:2213px;width:153px;height:2px;background:#c4c4c4"></div><div class="r" style="left:652px;top:2213px;width:138px;height:2px;background:#c4c4c4"></div>
<div class="r" style="left:398px;top:2215px;width:17px;height:313px;background:#f0f0f0;border-right:1px solid #ddd"></div>
<div class="r" style="left:461px;top:2270px;width:1px;height:258px;background:#e4e4e4"></div>
<svg style="left:407px;top:2248px" width="15" height="18"><use href="#fd"/></svg>
<div class="r" style="left:398px;top:2458px;width:25px;height:27px;background:#fffae3"></div>
<div class="r" style="left:423px;top:2458px;width:367px;height:60px;background:#5572a8"></div>
<div class="r" style="left:423px;top:2518px;width:367px;height:10px;background:#3f5e9b"></div>
<div class="r" style="left:461px;top:2458px;width:1px;height:70px;background:#dde"></div>
<pre class="cd" style="left:459.5px;top:2243.8px"><b>public static void</b> main(String[] args)
    <cite>// <em>获取到连接</em></cite>
    Connection connection = ConnectionUtil
    <cite>// <em>获取通道</em></cite>
    Channel channel = connection.createChannel();
    <cite>// <em>声明队列</em></cite>
    channel.queueDeclare(<i>QUEUE_NAME</i>,

<span class="w">    <cite>// <em>绑定队列到交换机，同时指定需要</em></cite>
    channel.queueBind(<i>QUEUE_NAME</i>, <i>EXCHANGE</i>
    channel.queueBind(<i>QUEUE_NAME</i>, <i>EXCHANGE</i></span></pre>
<div class="r" style="left:398px;top:2528px;width:392px;height:25px;background:#f4f4f4;border-top:1px solid #ddd;border-bottom:1px solid #ccc;box-sizing:border-box"></div>
<p class="gr" style="left:424px;top:2532px">Recv</p><p class="gr" style="left:462px;top:2532px">›</p><p class="gr" style="left:475px;top:2532px">main()</p>
<div class="r" style="left:398px;top:2553px;width:392px;height:25px;background:#e9ecf1;border-bottom:1px solid #ccc;box-sizing:border-box"></div>
</div>

<!-- Panel F -->
<div class="P" style="clip-path:inset(2604px 0 481px 0)">
<div class="r" style="left:0;top:2604px;width:255px;height:18px;background:#f2f2f2;border-bottom:1px solid #ccc"></div>
<p style="left:-23.5px;top:2600px">Project</p><div class="tr" style="left:25px;top:2606px"></div>
<svg style="left:154px;top:2600px" width="100" height="20"><use href="#pb"/></svg>
<div class="r" style="left:244px;top:2663px;width:11px;height:312px;background:#e8e8e8"></div>
<div class="r" style="left:240px;top:2646px;width:14px;height:2px;background:#e00"></div>
<div class="r" style="left:0;top:3011px;width:255px;height:21px;background:#d0d0d0"></div>
<div class="T" style="left:-34px;top:2612.5px">
<p style="font-weight:bold"><u></u><u class="j"></u>baoman_webs</p>
<p><u class="d"></u><u class="h"></u>src</p>
<p class="l1"><u></u><u class="h"></u>main</p>
<p class="l1"><u></u><u class="h"></u>test</p>
<p><u></u><u class="e"></u>baoman_parents.iml</p>
<p><u></u><u class="m"></u>pom.xml</p>
<p style="margin-left:-26px"><u></u><u class="h"></u><span style="font-weight:bold">fengyuan-rabbitmq</span> <span style="color:#888">C:\1905A\fengyuan-rabbitmq</span></p>
<p><u class="d"></u><u class="h"></u>src</p>
<p class="l1"><u class="n"></u><u class="h"></u>main</p>
<p class="l2"><u class="d"></u><u class="j"></u>java</p>
<p class="l3"><u class="d"></u><u class="f"></u>com.fengyuan.rabbitmq</p>
<p class="l4"><u class="d"></u><u class="f"></u>direct</p>
<p class="l5"><u></u><u class="c g"></u>Recv</p>
<p class="l5"><u></u><u class="c g"></u>Recv2</p>
<p class="l5"><u></u><u class="c g"></u>Send</p>
<p class="l4"><u class="n"></u><u class="f"></u>fanout</p>
<p class="l4"><u class="n"></u><u class="f"></u>simple</p>
<p class="l4"><u class="d"></u><u class="f"></u>spring</p>
<p class="l5"><u></u><u class="c g"></u>Application</p>
<p class="l5"><u></u><u class="c"></u>Listener</p>
</div>
<div class="r" style="left:255px;top:2604px;width:535px;height:16px;background:#f2f2f2"></div>
<div class="tb" style="left:255px;top:2604px;width:138px;height:16px;padding-left:10px;line-height:11px"><u class="c g"></u> Application.java<small>×</small></div>
<div class="tb" style="left:393px;top:2604px;width:129px;height:16px;padding-left:10px;line-height:11px;background:#d3dccb"><u class="c g"></u> MqDemo.java<small>×</small></div>
<div class="tb on" style="left:522px;top:2604px;width:119px;height:18px;padding-left:10px;line-height:11px"><u class="c"></u>Listener.java<small>×</small></div>
<div class="tb" style="left:641px;top:2604px;width:145px;height:16px;padding-left:10px;line-height:11px"><u class="c g"></u> direct\Recv2.java<small>×</small></div>
<div class="r" style="left:255px;top:2604px;width:1px;height:430px;background:#c4c4c4"></div>
<div class="r" style="left:256px;top:2621px;width:266px;height:2px;background:#c4c4c4"></div><div class="r" style="left:641px;top:2621px;width:149px;height:2px;background:#c4c4c4"></div>
<div class="r" style="left:256px;top:2623px;width:72px;height:411px;background:#f0f0f0;border-right:1px solid #d8d8d8"></div>
<div class="r" style="left:256px;top:2867px;width:72px;height:27px;background:#fcf6db"></div>
<div class="r" style="left:329px;top:2867px;width:461px;height:27px;background:#fffae3"></div>
<div class="r" style="left:375px;top:2835px;width:1px;height:200px;background:#e4e4e4"></div>
<div class="r" style="left:447px;top:2895px;width:1px;height:85px;background:#e4e4e4"></div>
<div class="r" style="left:553px;top:2867px;width:72px;height:27px;background:#5572a8"></div>
<div class="r" style="left:625px;top:2867px;width:2px;height:27px;background:#000"></div>
<div class="r" style="left:406px;top:2678px;width:29px;height:27px;background:#e8e8ff;border:1.5px solid #a8d8c8;box-sizing:border-box"></div>
<pre class="ln" style="left:260px;top:2626.5px"> 1
 2
 3
 9
10
11
12
13
14
15
16
17
18
19
20</pre>
<svg style="left:321px;top:2683px" width="14" height="16"><path d="M.5.5H13.5V15.5H.5Z" fill="#fff" stroke="#ddd"/><path d="M3 8H11M7 4V12" stroke="#ccc"/></svg>
<svg style="left:321px;top:2820px" width="15" height="18"><use href="#fd"/></svg>
<svg style="left:321px;top:3007px" width="15" height="18"><use href="#fo"/></svg>
<pre class="cd" style="left:337.5px;top:2626.5px"><b>package</b> com.fengyuan.rabbitmq.spring;

<b>import</b> <span style="color:#888">...</span>

<dfn>@Component</dfn>
<b>public class</b> <span style="color:#999">Listener</span> {

    <dfn>@RabbitListener</dfn>(bindings = <dfn>@QueueBinding</dfn>(
            value = <dfn>@Queue</dfn>(value = <s>"spring.test.queue"</s>
            exchange = <dfn>@</dfn><span class="w">Exchange</span>(
                    value = <s>"spring.test.exchange"</s>
                    ignoreDeclarationExceptions = <s>"true"</s>
                    type = ExchangeTypes.<i>TOPIC</i>
            ),
            key = {<s>"#.#"</s>}))</pre>
<svg style="left:586px;top:2871px" width="8" height="18"><path d="M1 .5H7M4 .5V17M1 17H7" stroke="#caa" fill="none"/></svg>
</div>

<!-- Panel G -->
<div class="P" style="clip-path:inset(3054px 0 17px 0)">
<div class="r" style="left:0;top:3054px;width:790px;height:27px;background:#f2f2f2;border-bottom:1px solid #bbb"></div>
<div class="r" style="left:16px;top:3058px;width:1px;height:20px;background:#ccc"></div>
<div class="r" style="left:74px;top:3058px;width:1px;height:20px;background:#ccc"></div>
<svg style="left:23px;top:3058px" width="16" height="20"><path d="M14 10H4M8 3 1 10 8 17" fill="none" stroke="#3b8ed0" stroke-width="3.4"/></svg>
<svg style="left:50px;top:3058px" width="16" height="20"><path d="M2 10H12M8 3 15 10 8 17" fill="none" stroke="#ccc" stroke-width="3.4"/></svg>
<svg style="left:82px;top:3060px" width="18" height="16"><path d="M3 1V13M0 9 3 13 6 9" fill="none" stroke="#3a9a5a" stroke-width="2"/><path d="M9 2H16M9 8H16M9 14H16" stroke="#777" stroke-dasharray="2 1" stroke-width="2"/></svg>
<div class="r" style="left:106px;top:3057px;width:110px;height:22px;background:#e8e8e8;border:1px solid #b0b0b0;box-sizing:border-box"></div>
<div class="r" style="left:112px;top:3061px;width:14px;height:14px;border-radius:50%;background:#a5cc9a"></div>
<p style="left:131px;top:3059px;color:#222">Application</p>
<svg style="left:202px;top:3064px" width="10" height="8"><path d="M1 1 5 6 9 1" fill="none" stroke="#555"/></svg>
<svg style="left:226px;top:3058px" width="17" height="20"><path d="M14 4A7 7 0 1 0 14 16" fill="none" stroke="#2fa84f" stroke-width="3"/><path d="M9 2 16 6 9 10Z" fill="#2fa84f"/></svg>
<svg style="left:235px;top:3056px" width="285" height="24"><use href="#tb"/></svg>
<div class="r" style="left:337px;top:3061px;width:12px;height:14px;background:#e05040"></div>
<div class="r" style="left:0;top:3082px;width:790px;height:24px;background:#ebebeb;border-bottom:1px solid #c8c8c8;box-sizing:border-box"></div>
<p class="B" style="left:0;top:3085px">n_user</p>
<svg style="left:42px;top:3082px" width="8" height="24"><use href="#sp"/></svg>
<p style="left:53px;top:3085px"><u class="h"></u>src</p>
<svg style="left:92px;top:3082px" width="8" height="24"><use href="#sp"/></svg>
<p style="left:102px;top:3085px"><u class="h"></u>main</p>
<svg style="left:152px;top:3082px" width="8" height="24"><use href="#sp"/></svg>
<p style="left:161px;top:3085px"><u class="j"></u>java</p>
<svg style="left:208px;top:3082px" width="8" height="24"><use href="#sp"/></svg>
<p style="left:217px;top:3085px"><u class="f"></u>com</p>
<svg style="left:264px;top:3082px" width="8" height="24"><use href="#sp"/></svg>
<p style="left:274px;top:3085px"><u class="f"></u>baoman</p>
<svg style="left:346px;top:3082px" width="8" height="24"><use href="#sp"/></svg>
<p style="left:354px;top:3085px"><u class="f"></u>user</p>
<svg style="left:401px;top:3082px" width="8" height="24"><use href="#sp"/></svg>
<p style="left:411px;top:3085px"><u class="f"></u>listener</p>
<svg style="left:475px;top:3082px" width="8" height="24"><use href="#sp"/></svg>
<p style="left:485px;top:3085px"><u class="c"></u>UserListener</p>
<svg style="left:578px;top:3082px" width="8" height="24"><use href="#sp"/></svg>
<div class="r" style="left:312px;top:3203px;width:10px;height:84px;background:#e8e8e8"></div>
<div class="r" style="left:0;top:3380px;width:232px;height:10px;background:#e8e8e8"></div>
<div class="T" style="left:33px;top:3123.5px">
<p><u class="d"></u><u class="f"></u>com.fengyuan.rabbitmq</p>
<p class="l1"><u class="d"></u><u class="f"></u>controller</p>
<p class="l2"><u></u><u class="c"></u>ItemController</p>
<p class="l1"><u class="n"></u><u class="f"></u>direct</p>
<p class="l1"><u class="n"></u><u class="f"></u>fanout</p>
<p class="l1"><u class="d"></u><u class="f"></u>service</p>
<p class="l2"><u></u><u class="c"></u>ItemService</p>
<p class="l1"><u class="n"></u><u class="f"></u>simple</p>
<p class="l1"><u class="d"></u><u class="f"></u>spring</p>
<p class="l2"><u></u><u class="c"></u>Listener</p>
<p class="l1"><u class="n"></u><u class="f"></u>topic</p>
<p class="l1"><u class="n"></u><u class="f"></u>util</p>
<p class="l1"><u class="n"></u><u class="f"></u>work</p>
</div>
<div class="r" style="left:0;top:3106px;width:322px;height:25px;background:#f2f2f2;border-bottom:1px solid #ccc;box-sizing:border-box"></div>
<p style="left:-12px;top:3110px">Project</p><div class="tr" style="left:31px;top:3116px"></div>
<svg style="left:222px;top:3109px" width="100" height="20"><use href="#pb"/></svg>
<div class="r" style="left:322px;top:3106px;width:468px;height:25px;background:#f2f2f2"></div>
<div class="tb on" style="left:322px;top:3106px;width:146px;height:27px;padding-left:9px;line-height:24px"><u class="c"></u>UserListener.java<small>×</small></div>
<div class="tb" style="left:468px;top:3106px;width:177px;height:24px;padding-left:9px;line-height:24px"><u class="c"></u>application.properties<small>×</small></div>
<div class="tb" style="left:645px;top:3106px;width:145px;height:24px;padding-left:9px;line-height:24px"><u class="c g"></u> UserApplication.java</div>
<div class="r" style="left:468px;top:3131px;width:322px;height:2px;background:#c4c4c4"></div>
<div class="r" style="left:322px;top:3106px;width:1px;height:285px;background:#c4c4c4"></div>
<div class="r" style="left:323px;top:3133px;width:73px;height:234px;background:#f0f0f0;border-right:1px solid #d8d8d8"></div>
<div class="r" style="left:443px;top:3133px;width:1px;height:234px;background:#e8e8e8"></div>
<div class="r" style="left:515px;top:3195px;width:1px;height:80px;background:#e8e8e8"></div>
<pre class="ln" style="left:328.5px;top:3142.2px">15
16
17
18
19
20
21
22</pre>
<svg style="left:389px;top:3307px" width="15" height="18"><use href="#fo"/></svg>
<svg style="left:389px;top:3336px" width="15" height="18"><use href="#fd"/></svg>
<pre class="cd" style="left:441px;top:3142.2px">        value = <dfn>@Queue</dfn>(value = <s>"user.queue"</s>
        exchange = <dfn>@Exchange</dfn>(
                value = <s>"item.exchange"</s>
                ignoreDeclarationExceptions
                type = ExchangeTypes.<i>TOPIC</i>
        ),
        key = {<s>"item.#"</s>}))
<b>public void</b> getMsg(String msg){
    System.<i>out</i>.println(<s>"消费者接收到消息"</s>);</pre>
<div class="r" style="left:323px;top:3367px;width:467px;height:23px;background:#f4f4f4;border-top:1px solid #ddd;box-sizing:border-box"></div>
<p class="gr" style="left:406.5px;top:3370px">UserListener</p>
<div class="r" style="left:0;top:3390px;width:790px;height:27px;background:#e1e6ee;border-top:1px solid #bbb;border-bottom:1px solid #bbb;box-sizing:border-box"></div>
<p style="left:-17px;top:3395px">Dashboard:</p>
<div class="r" style="left:0;top:3417px;width:265px;height:26px;background:#f2f2f2;border-bottom:1px solid #bbb;box-sizing:border-box"></div>
<svg style="left:14px;top:3420px" width="14" height="20"><path d="M0 10H14M7 1V7M7 19V13M3 4 7 8 11 4M3 16 7 12 11 16" fill="none" stroke="#668" stroke-width="1.3"/></svg>
<div class="r" style="left:42px;top:3419px;width:25px;height:22px;background:#e0e0e0;border:1px solid #ccc;box-sizing:border-box"></div>
<div class="r" style="left:69px;top:3419px;width:25px;height:22px;background:#e0e0e0;border:1px solid #ccc;box-sizing:border-box"></div>
<div class="r" style="left:50px;top:3423px;width:9px;height:13px;background:#889;opacity:.7"></div>
<div class="r" style="left:77px;top:3423px;width:9px;height:13px;background:linear-gradient(#d09a40,#5a9a5a,#5580b8)"></div>
<svg style="left:106px;top:3422px" width="16" height="16"><path d="M0 1H14L9 8V15L5 13V8Z" fill="#4a8ec8"/></svg>
<div class="r" style="left:0;top:3486px;width:265px;height:12px;background:#d0d0d0"></div>
<div class="r" style="left:5px;top:3450px;width:12px;height:12px;border-radius:50%;background:#6ab06a"></div>
<p style="left:21px;top:3446px">Spring Boot</p>
<svg style="left:4px;top:3472px" width="10" height="8"><path d="M1 1 5 6 9 1" fill="none" stroke="#555" stroke-width="1.6"/></svg>
<svg style="left:25px;top:3468px" width="12" height="16"><path d="M0 0 11 8 0 16Z" fill="#3aa050"/></svg>
<p style="left:41px;top:3467px">Running</p>
<svg style="left:45px;top:3487px" width="11" height="14"><path d="M0 0 10 7 0 14Z" fill="#3aa050"/></svg>
<p class="B" style="left:61px;top:3489px">Application <span style="color:#4a80c0;font-weight:normal">:8080/</span></p>
<div class="r" style="left:265px;top:3417px;width:525px;height:27px;background:#e9ecf1;border-bottom:1px solid #bbb;border-left:1px solid #bbb;box-sizing:border-box"></div>
<div class="r" style="left:265px;top:3417px;width:69px;height:27px;background:#fff;border-left:1px solid #bbb;box-sizing:border-box"></div>
<div class="r" style="left:334px;top:3417px;width:81px;height:26px;background:#d0d0d0"></div>
<div class="r" style="left:272px;top:3423px;width:13px;height:14px;background:#cfe0ee;border:1px solid #556"></div>
<p style="left:290px;top:3421px">Console</p>
<svg style="left:339px;top:3424px" width="16" height="16"><path d="M2 14 7 3 10 9 14 2" fill="none" stroke="#e8902c" stroke-width="3"/></svg>
<p style="left:359px;top:3421px">Endpoints</p>
<div class="r" style="left:265px;top:3444px;width:525px;height:4px;background:#f6f6f6;border-bottom:1px solid #ddd"></div>
<div class="r" style="left:265px;top:3444px;width:1px;height:60px;background:#bbb"></div>
<pre class="con" style="left:283px;top:3449.5px">2020-04-23 14:40:44.310  <span style="color:#18e018">INFO</span> <span style="color:#e040e0">6620</span> --- [nio-8080-exec-1]
2020-04-23 14:40:44.310  <span style="color:#18e018">INFO</span> <span style="color:#e040e0">6620</span> --- [nio-8080-exec-1]</pre>
</div>

<!-- Frames -->
<div class="W">
<div class="fr" style="left:-6px;top:682px;width:802px;height:376px"></div>
<div class="fr" style="left:-6px;top:1075px;width:398px;height:330px"></div>
<div class="fr" style="left:395px;top:1075px;width:401px;height:330px"></div>
<div class="fr" style="left:-6px;top:1412px;width:398px;height:372px"></div>
<div class="fr" style="left:395px;top:1412px;width:401px;height:372px"></div>
<div class="fr" style="left:-6px;top:1787px;width:398px;height:402px"></div>
<div class="fr" style="left:395px;top:1787px;width:401px;height:402px"></div>
<div class="fr" style="left:-6px;top:2192.5px;width:398px;height:401px"></div>
<div class="fr" style="left:395px;top:2192.5px;width:401px;height:401px"></div>
<div class="fr" style="left:-6px;top:2601px;width:802px;height:436.5px"></div>
<div class="fr" style="left:-6px;top:3051px;width:802px;height:450px"></div>
</div>
</body></html>
